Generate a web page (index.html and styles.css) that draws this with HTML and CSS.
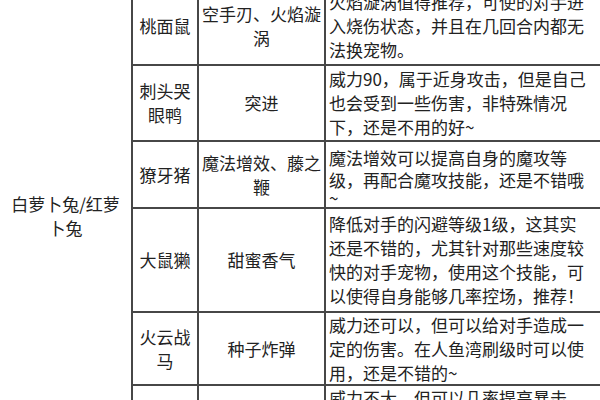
FILE: index.html
```html
<!DOCTYPE html>
<html lang="zh-CN">
<head>
<meta charset="utf-8">
<link rel="stylesheet" href="styles.css">
</head>
<body>
<div class="table">
  <div class="cell c1">白萝卜兔/红萝卜兔</div>

  <div class="cell c2">桃面鼠</div>
  <div class="cell c3">空手刃、火焰漩涡</div>
  <div class="cell c4">火焰漩涡值得推荐，可使的对手进入烧伤状态，并且在几回合内都无法换宠物。</div>

  <div class="cell c2">刺头哭眼鸭</div>
  <div class="cell c3">突进</div>
  <div class="cell c4">威力90，属于近身攻击，但是自己也会受到一些伤害，非特殊情况下，还是不用的好~</div>

  <div class="cell c2">獠牙猪</div>
  <div class="cell c3">魔法增效、藤之鞭</div>
  <div class="cell c4 low"><p class="txt">魔法增效可以提高自身的魔攻等级，再配合魔攻技能，还是不错哦<br><span class="tilde">~</span></p></div>

  <div class="cell c2">大鼠獭</div>
  <div class="cell c3">甜蜜香气</div>
  <div class="cell c4">降低对手的闪避等级1级，这其实还是不错的，尤其针对那些速度较快的对手宠物，使用这个技能，可以使得自身能够几率控场，推荐！</div>

  <div class="cell c2">火云战马</div>
  <div class="cell c3">种子炸弹</div>
  <div class="cell c4">威力还可以，但可以给对手造成一定的伤害。在人鱼湾刷级时可以使用，还是不错的~</div>

  <div class="cell c2">黑甲虫</div>
  <div class="cell c3">虫咬</div>
  <div class="cell c4 top">威力不大，但可以几率提高暴击率，还是可以的。</div>
</div>
</body>
</html>
```

FILE: styles.css
```css
html, body {
  margin: 0;
  padding: 0;
  background: #ffffff;
}

body {
  width: 600px;
  height: 400px;
  overflow: hidden;
  font-family: "Noto Sans CJK SC", "Microsoft YaHei", sans-serif;
  font-size: 17px;
  line-height: 24px;
  color: #222222;
}

.table {
  display: grid;
  grid-template-columns: 131px 64px 125px 300px;
  grid-template-rows: 76px 74px 65px 102px 71px 80px;
  gap: 2px;
  background: #474747;
  margin-top: -12px;
  width: 626px;
}

.cell {
  background: #ffffff;
  display: flex;
  align-items: center;
  justify-content: center;
  text-align: center;
  min-width: 0;
  min-height: 0;
}

.txt {
  margin: 0;
}

.tilde {
  display: inline-block;
  line-height: 14px;
  vertical-align: top;
}

.c1 {
  grid-column: 1;
  grid-row: 1 / 7;
  padding: 0 8px 22px 8px;
}

.c2 {
  grid-column: 2;
}

.c3 {
  grid-column: 3;
}

.c4 {
  grid-column: 4;
  justify-content: flex-start;
  text-align: left;
  padding: 0 40px 0 3px;
}

.c4.low {
  align-items: flex-start;
  line-height: 22px;
  padding-top: 5px;
}

.c4.top {
  align-items: flex-start;
}
```
